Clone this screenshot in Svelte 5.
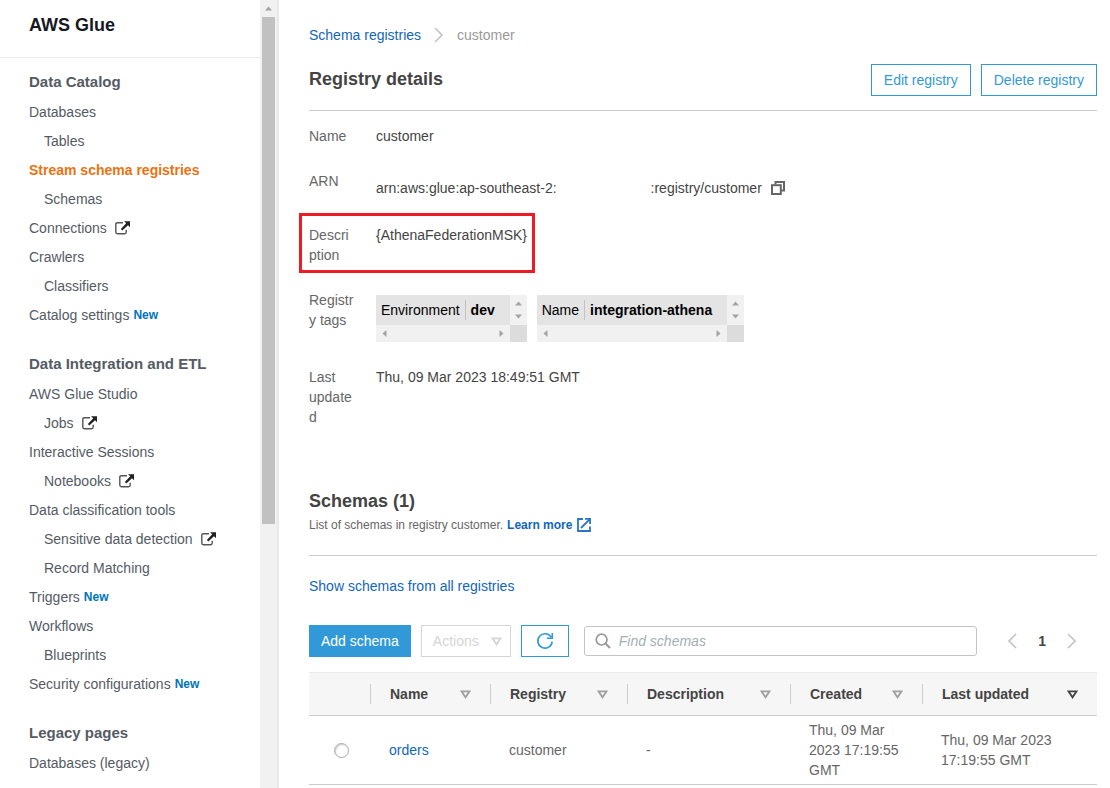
<script>
  const sections = [
    {
      title: 'Data Catalog',
      items: [
        { label: 'Databases' },
        { label: 'Tables', nested: true },
        { label: 'Stream schema registries', active: true },
        { label: 'Schemas', nested: true },
        { label: 'Connections', external: true },
        { label: 'Crawlers' },
        { label: 'Classifiers', nested: true },
        { label: 'Catalog settings', isNew: true }
      ]
    },
    {
      title: 'Data Integration and ETL',
      items: [
        { label: 'AWS Glue Studio' },
        { label: 'Jobs', nested: true, external: true },
        { label: 'Interactive Sessions' },
        { label: 'Notebooks', nested: true, external: true },
        { label: 'Data classification tools' },
        { label: 'Sensitive data detection', nested: true, external: true },
        { label: 'Record Matching', nested: true },
        { label: 'Triggers', isNew: true },
        { label: 'Workflows' },
        { label: 'Blueprints', nested: true },
        { label: 'Security configurations', isNew: true }
      ]
    },
    { title: 'Legacy pages', items: [{ label: 'Databases (legacy)' }] }
  ];

  const tags = [
    { key: 'Environment', value: 'dev' },
    { key: 'Name', value: 'integration-athena' }
  ];

  const columns = ['Name', 'Registry', 'Description', 'Created', 'Last updated'];
  const sortedColumn = 'Last updated';

  const rows = [
    {
      name: 'orders',
      registry: 'customer',
      description: '-',
      created: 'Thu, 09 Mar 2023 17:19:55 GMT',
      updated: 'Thu, 09 Mar 2023 17:19:55 GMT'
    }
  ];

  let query = $state('');
  let selected = $state('');
</script>

{#snippet triangle()}
  <svg width="11" height="9" viewBox="0 0 11 9" aria-hidden="true">
    <path d="M1.5 1.3H9.5L5.5 7.3Z" fill="none" stroke="currentColor" stroke-width="1.8" />
  </svg>
{/snippet}

{#snippet arrow(direction)}
  <svg class={direction} width="7" height="7" viewBox="0 0 7 7" aria-hidden="true">
    <path d="M0 5.5 3.5 1.5 7 5.5Z" fill="#a3a3a3" />
  </svg>
{/snippet}

{#snippet chevron(points)}
  <svg width="10" height="16" viewBox="0 0 10 16" aria-hidden="true">
    <polyline {points} fill="none" stroke="#c4c4c4" stroke-width="1.7" />
  </svg>
{/snippet}

<div class="layout">
  <aside>
    <div class="panel">
      <div class="brand">AWS Glue</div>
      <nav aria-label="AWS Glue">
        {#each sections as section}
          <section>
            <h3>{section.title}</h3>
            <ul>
              {#each section.items as item}
                <li class:nested={item.nested}>
                  <a href="#top" class:active={item.active}>
                    {item.label}{#if item.external}<svg width="15" height="14" viewBox="0 0 15 14" aria-hidden="true">
                        <path d="M8 1.7H2.4Q.8 1.7 .8 3.3V11.1Q.8 12.7 2.4 12.7H9.6Q11.2 12.7 11.2 11.1V8.8" fill="none" stroke="#555" stroke-width="1.4" />
                        <path d="M9 .2H15V6.2L13 4.3 7.3 9.4 5.9 8 11.2 2.3Z" fill="#222" />
                      </svg>{/if}
                  </a>
                  {#if item.isNew}<span class="new">New</span>{/if}
                </li>
              {/each}
            </ul>
          </section>
        {/each}
      </nav>
    </div>
    <div class="scrollbar" aria-hidden="true">
      <div class="step">{@render arrow('up')}</div>
      <div class="thumb"></div>
      <div class="track"></div>
    </div>
  </aside>

  <main id="top">
    <nav class="crumbs" aria-label="Breadcrumb">
      <a href="#top">Schema registries</a>
      {@render chevron('1,1 8,8 1,15')}
      <span>customer</span>
    </nav>

    <header class="title">
      <h1>Registry details</h1>
      <div class="actions">
        <button class="outline">Edit registry</button>
        <button class="outline">Delete registry</button>
      </div>
    </header>

    <dl>
      <div class="field">
        <dt>Name</dt>
        <dd>customer</dd>
      </div>
      <div class="field">
        <dt>ARN</dt>
        <dd class="arn">
          <span>arn:aws:glue:ap-southeast-2:</span>
          <span class="suffix">:registry/customer</span>
          <button class="copy" aria-label="Copy ARN">
            <svg width="14" height="14" viewBox="0 0 14 14" aria-hidden="true">
              <path d="M4.5 3.5V1H13V9.5H10.5" fill="none" stroke="#666" stroke-width="2" />
              <rect x="1" y="4.2" width="8.8" height="8.8" fill="none" stroke="#666" stroke-width="2" />
            </svg>
          </button>
        </dd>
      </div>
      <div class="field marked">
        <dt>Description</dt>
        <dd>{'{AthenaFederationMSK}'}</dd>
      </div>
      <div class="field">
        <dt>Registry tags</dt>
        <dd class="tags">
          {#each tags as tag}
            <div class="tag">
              <div class="pair"><span>{tag.key}</span><strong>{tag.value}</strong></div>
              <div class="vbar">{@render arrow('up')}{@render arrow('down')}</div>
              <div class="hbar">{@render arrow('left')}{@render arrow('right')}</div>
              <div class="corner"></div>
            </div>
          {/each}
        </dd>
      </div>
      <div class="field">
        <dt>Last updated</dt>
        <dd>Thu, 09 Mar 2023 18:49:51 GMT</dd>
      </div>
    </dl>

    <header class="schemas">
      <h2>Schemas (1)</h2>
      <p>
        List of schemas in registry customer.
        <a href="#top">Learn more<svg width="14" height="14" viewBox="0 0 14 14" aria-hidden="true">
            <path d="M6 1H1V13H13V8.5M4 10 12.6 1.4" fill="none" stroke="#2a75c4" stroke-width="1.8" />
            <path d="M8 0H14V6H12.2V1.8H8Z" fill="#2a75c4" />
          </svg></a>
      </p>
    </header>

    <a class="all" href="#top">Show schemas from all registries</a>

    <div class="toolbar">
      <button class="primary">Add schema</button>
      <button class="muted" disabled>Actions {@render triangle()}</button>
      <button class="outline refresh" aria-label="Refresh">
        <svg width="18" height="18" viewBox="0 0 18 18" aria-hidden="true">
          <path d="M15.2 5.2A7.2 7.2 0 1 0 16.2 9.6M16.3 1V6.2H10.8" fill="none" stroke="#3199d8" stroke-width="1.6" />
        </svg>
      </button>
      <label class="search">
        <svg width="16" height="16" viewBox="0 0 16 16" aria-hidden="true">
          <circle cx="6.6" cy="6.6" r="5.4" fill="none" stroke="#999" stroke-width="1.7" />
          <path d="M10.5 10.5 15 15" stroke="#999" stroke-width="2" />
        </svg>
        <input type="text" placeholder="Find schemas" aria-label="Find schemas" bind:value={query} />
      </label>
      <div class="pager">
        <button aria-label="Previous page">{@render chevron('9,1 2,8 9,15')}</button>
        <strong>1</strong>
        <button aria-label="Next page">{@render chevron('1,1 8,8 1,15')}</button>
      </div>
    </div>

    <table>
      <colgroup>
        <col class="c-pick" /><col class="c-name" /><col class="c-registry" />
        <col class="c-description" /><col class="c-created" /><col />
      </colgroup>
      <thead>
        <tr>
          <td></td>
          {#each columns as column}
            <th scope="col">
              <div class="head">
                <span>{column}</span>
                <button class="sort" class:sorted={column === sortedColumn} aria-label="Sort by {column}">
                  {@render triangle()}
                </button>
              </div>
            </th>
          {/each}
        </tr>
      </thead>
      <tbody>
        {#each rows as row}
          <tr>
            <td class="pick">
              <input type="radio" name="schema" value={row.name} aria-label={row.name} bind:group={selected} />
            </td>
            <td><a href="#top">{row.name}</a></td>
            <td>{row.registry}</td>
            <td>{row.description}</td>
            <td>{row.created}</td>
            <td>{row.updated}</td>
          </tr>
        {/each}
      </tbody>
    </table>
  </main>
</div>

<style>
  :global(body) {
    background: #fff;
  }

  .layout {
    display: grid;
    grid-template-columns: 279px minmax(0, 1fr);
    height: 100vh;
    overflow: hidden;
    font: 14px/20px 'Liberation Sans', Arial, sans-serif;
    color: #444;
  }

  h1,
  h2,
  h3,
  p,
  ul,
  dl,
  dd {
    margin: 0;
    padding: 0;
  }

  a {
    color: #1166bb;
    text-decoration: none;
  }

  button {
    box-sizing: border-box;
    padding: 0;
    border: 0;
    background: none;
    font: inherit;
    color: inherit;
  }

  svg {
    display: block;
    flex: none;
  }

  /* Sidebar */
  aside {
    display: grid;
    grid-template-columns: minmax(0, 1fr) 17px;
    min-height: 0;
    border-right: 2px solid #e6eaea;
  }

  .panel {
    overflow: hidden;
  }

  .brand {
    padding: 15px 29px 22px;
    border-bottom: 1px solid #eaeded;
    font-size: 18px;
    font-weight: bold;
    color: #16191f;
  }

  aside nav {
    display: grid;
    gap: 25px;
    padding: 14px 0 0 29px;
    color: #545b64;
  }

  h3 {
    padding-bottom: 5px;
    font-size: 15px;
    line-height: 20px;
  }

  ul {
    list-style: none;
  }

  li {
    display: flex;
    align-items: center;
    gap: 4px;
    height: 29px;
  }

  li.nested {
    padding-left: 15px;
  }

  li a {
    display: flex;
    align-items: center;
    gap: 8px;
    color: #545b64;
  }

  li a.active {
    font-weight: bold;
    color: #ec7211;
  }

  .new {
    font-size: 12px;
    font-weight: bold;
    color: #0073bb;
  }

  .scrollbar {
    display: flex;
    flex-direction: column;
    padding: 0 2px;
    background: #f1f1f1;
  }

  .step {
    display: grid;
    place-items: center;
    height: 17px;
  }

  .thumb {
    flex: 507;
    background: #c1c1c1;
  }

  .track {
    flex: 264;
  }

  .down {
    transform: rotate(180deg);
  }

  .left {
    transform: rotate(-90deg);
  }

  .right {
    transform: rotate(90deg);
  }

  /* Registry details */
  main {
    padding: 25px 13px 0 30px;
  }

  .crumbs {
    display: flex;
    align-items: center;
    gap: 13px;
    height: 20px;
    color: #999;
  }

  .title {
    display: flex;
    justify-content: space-between;
    margin-top: 19px;
    padding-bottom: 14px;
    border-bottom: 1px solid #ccc;
  }

  h1,
  h2 {
    font-size: 18px;
    line-height: 30px;
  }

  .actions {
    display: flex;
    gap: 10px;
  }

  .outline,
  .primary,
  .muted {
    height: 32px;
    padding: 0 11px;
    border: 1px solid #3199d8;
    color: #3199d8;
    white-space: nowrap;
  }

  .actions .outline {
    padding: 0 12px;
  }

  dl {
    display: grid;
    gap: 25px;
    padding-top: 15px;
  }

  .field {
    display: grid;
    grid-template-columns: 46px minmax(0, 1fr);
    column-gap: 21px;
  }

  dt {
    color: #666;
    overflow-wrap: break-word;
  }

  .arn {
    display: flex;
    align-items: center;
    padding: 7px 0 2px;
  }

  .suffix {
    padding-left: 94px;
  }

  .copy {
    margin-left: 9px;
  }

  .marked {
    position: relative;
  }

  .marked::before {
    content: '';
    position: absolute;
    top: -12px;
    left: -10px;
    box-sizing: border-box;
    width: 236px;
    height: 60px;
    border: 3px solid #ed1c24;
  }

  .tags {
    display: flex;
    gap: 10px;
    padding-top: 5px;
  }

  .tag {
    display: grid;
    grid-template: 30px 17px / auto 17px;
    background: #f1f1f1;
    color: #000;
  }

  .pair {
    display: flex;
    align-items: center;
    padding: 0 15px 0 5px;
    background: #e4e4e4;
  }

  .pair span {
    padding-right: 5px;
    border-right: 1px solid #c8bfbf;
  }

  .pair strong {
    padding-left: 5px;
  }

  .vbar,
  .hbar {
    display: flex;
    align-items: center;
    justify-content: space-between;
    padding: 5px;
  }

  .vbar {
    flex-direction: column;
  }

  .corner {
    background: #dcdcdc;
  }

  /* Schemas */
  .schemas {
    margin-top: 59px;
    padding-bottom: 21px;
    border-bottom: 1px solid #ccc;
  }

  .schemas p {
    display: flex;
    gap: 4px;
    font-size: 12px;
    line-height: 18px;
    color: #666;
  }

  .schemas a {
    display: flex;
    align-items: center;
    gap: 5px;
    font-weight: bold;
  }

  .all {
    display: block;
    margin-top: 20px;
  }

  .toolbar {
    display: flex;
    align-items: center;
    gap: 10px;
    margin: 29px 0 15px;
  }

  .primary {
    background: #3199d8;
    color: #fff;
  }

  .muted {
    display: flex;
    align-items: center;
    gap: 12px;
    padding-right: 8px;
    border-color: #d5d5d5;
    color: #d5d5d5;
  }

  .refresh {
    padding: 0 14px;
  }

  .search {
    flex: 1;
    box-sizing: border-box;
    display: flex;
    align-items: center;
    gap: 8px;
    height: 30px;
    margin-left: 5px;
    padding: 0 10px;
    border: 1px solid #c4c4c4;
    border-radius: 3px;
  }

  .search input {
    flex: 1;
    min-width: 0;
    padding: 0;
    border: 0;
    outline: 0;
    font: inherit;
    color: #444;
  }

  .search input::placeholder {
    font-style: italic;
    color: #a2b0b5;
  }

  .pager {
    display: flex;
    align-items: center;
    gap: 21px;
    padding: 0 20px;
  }

  table {
    width: 100%;
    table-layout: fixed;
    border-collapse: collapse;
  }

  .c-pick {
    width: 61px;
  }

  .c-name {
    width: 120px;
  }

  .c-registry {
    width: 137px;
  }

  .c-description {
    width: 163px;
  }

  .c-created {
    width: 132px;
  }

  thead tr {
    border-top: 1px solid #eaeaea;
    background: #f6f6f6;
  }

  tr {
    border-bottom: 1px solid #ccc;
  }

  th {
    height: 42px;
    padding: 0;
    text-align: left;
  }

  .head {
    display: flex;
    align-items: center;
    justify-content: space-between;
    padding: 0 19px;
    border-left: 1px solid #ccc;
  }

  tbody td {
    padding: 4px 19px;
    color: #666;
  }

  .sort {
    color: #a0a0a0;
  }

  .sorted {
    color: #444;
  }

  tbody .pick {
    padding: 0 0 0 25px;
  }

  .pick input {
    appearance: none;
    display: block;
    width: 15px;
    height: 15px;
    margin: 0;
    border: 1px solid #aaa;
    border-radius: 50%;
    box-shadow: inset 1px 1px 1px #ccc;
  }

  .pick input:checked {
    background: radial-gradient(#3199d8 40%, #fff 45%);
  }
</style>
